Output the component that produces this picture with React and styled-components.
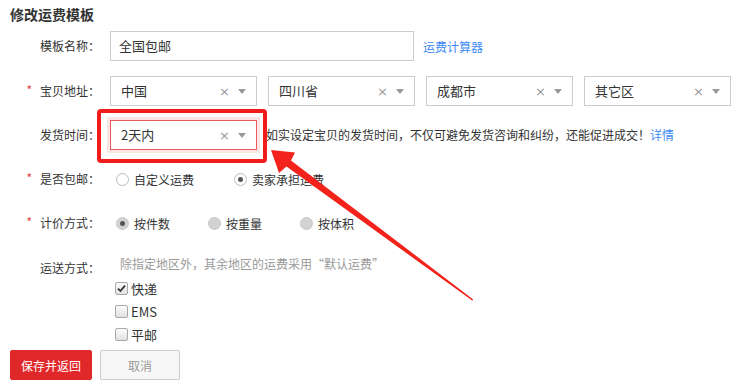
import React from "react";
import styled, { createGlobalStyle } from "styled-components";

const GlobalStyle = createGlobalStyle`
  body {
    margin: 0;
    font-family: "Noto Sans CJK SC", "Liberation Sans", sans-serif;
    font-size: 12px;
    color: #333;
    background: #fff;
  }
`;

const Page = styled.div`
  position: relative;
  width: 740px;
  height: 389px;
  overflow: hidden;
  padding: 4px 0 0 10px;
  box-sizing: border-box;
`;

const Title = styled.h2`
  margin: 0 0 7px;
  font-size: 14px;
  font-weight: bold;
  line-height: 20px;
  color: #333;
`;

const Row = styled.div`
  display: flex;
  align-items: ${(p) => (p.$top ? "flex-start" : "center")};
  height: ${(p) => (p.$auto ? "auto" : "30px")};
  margin-bottom: ${(p) => p.$mb ?? 14}px;
`;

const Label = styled.div`
  width: 90px;
  flex-shrink: 0;
  text-align: right;
  line-height: 20px;
  padding-top: ${(p) => p.$pt || 0}px;
  color: #333;
`;

const Star = styled.span`
  color: #e4393c;
  margin-right: 8px;
  position: relative;
  top: -1px;
`;

const Field = styled.div`
  margin-left: 10px;
  display: flex;
  align-items: center;
`;

const Input = styled.div`
  width: 304px;
  height: 30px;
  box-sizing: border-box;
  border: 1px solid #ccc;
  padding-left: 8px;
  font-size: 13px;
  line-height: 28px;
  color: #333;
`;

const Link = styled.a`
  color: #3d8af5;
  text-decoration: none;
  margin-left: ${(p) => p.$ml || 0}px;
  cursor: pointer;
`;

const Selects = styled.div`
  display: flex;
  gap: 11px;
`;

const SelectBox = styled.div`
  width: 147px;
  height: 30px;
  box-sizing: border-box;
  border: 1px solid ${(p) => (p.$focus ? "#ea5a5a" : "#ccc")};
  box-shadow: ${(p) => (p.$focus ? "0 0 0 3px #fbe6e6" : "none")};
  display: flex;
  align-items: center;
  padding: 0 10px 0 10px;
  font-size: 13px;
  color: #333;
`;

const SelectValue = styled.span`
  flex: 1;
  line-height: 28px;
`;

const Clear = styled.span`
  color: #999;
  font-size: 13px;
  font-family: "DejaVu Sans", sans-serif;
  margin-right: 8px;
  line-height: 1;
`;

const Caret = styled.span`
  width: 0;
  height: 0;
  border-left: 4.5px solid transparent;
  border-right: 4.5px solid transparent;
  border-top: 5px solid #999;
`;

const Help = styled.span`
  margin-left: 9px;
  line-height: 20px;
  color: #333;
`;

const RadioGroup = styled.div`
  display: flex;
  align-items: center;
  margin-left: 16px;
`;

const RadioItem = styled.label`
  display: flex;
  align-items: center;
  margin-right: ${(p) => p.$mr}px;
  font-size: 12px;
  color: #333;
`;

const RadioDot = styled.span`
  width: 13px;
  height: 13px;
  box-sizing: border-box;
  border-radius: 50%;
  border: 1px solid ${(p) => (p.$disabled ? "#c8c8c8" : "#bbb")};
  background: ${(p) => (p.$disabled ? "#d2d2d2" : "#fff")};
  margin-right: 5px;
  display: flex;
  align-items: center;
  justify-content: center;
  &::after {
    content: "";
    display: ${(p) => (p.$checked ? "block" : "none")};
    width: 5px;
    height: 5px;
    border-radius: 50%;
    background: #555;
  }
`;

const ShipBlock = styled.div`
  margin-left: 15px;
  display: flex;
  flex-direction: column;
`;

const Note = styled.div`
  color: #999;
  line-height: 20px;
  margin-left: 5px;
  margin-bottom: 3px;
`;

const CheckItem = styled.label`
  display: flex;
  align-items: center;
  height: 23px;
  font-size: 13px;
  color: #333;
`;

const CheckBox = styled.span`
  width: 13px;
  height: 13px;
  box-sizing: border-box;
  border: 1px solid #a8a8a8;
  border-radius: 2px;
  background: linear-gradient(#fbfbfb, #e2e2e2);
  margin-right: 3px;
  display: flex;
  align-items: center;
  justify-content: center;
`;

const Buttons = styled.div`
  display: flex;
  gap: 8px;
  margin-top: 4px;
`;

const Button = styled.button`
  height: 30px;
  width: ${(p) => p.$w}px;
  box-sizing: border-box;
  font-family: inherit;
  font-size: 12px;
  border-radius: 2px;
  border: 1px solid ${(p) => (p.$primary ? "#e0282b" : "#ccc")};
  background: ${(p) => (p.$primary ? "#e0282b" : "#f7f7f7")};
  color: ${(p) => (p.$primary ? "#fff" : "#999")};
  padding: 0;
  cursor: pointer;
`;

const Highlight = styled.div`
  position: absolute;
  left: 97px;
  top: 109px;
  width: 170px;
  height: 54px;
  box-sizing: border-box;
  border: 4px solid #f21c1c;
  border-radius: 4px;
  pointer-events: none;
`;

const ArrowLayer = styled.svg`
  position: absolute;
  left: 0;
  top: 0;
  pointer-events: none;
`;

const Select = ({ value, focus }) => (
  <SelectBox $focus={focus}>
    <SelectValue>{value}</SelectValue>
    <Clear>×</Clear>
    <Caret />
  </SelectBox>
);

const Radio = ({ text, checked, disabled, mr }) => (
  <RadioItem $mr={mr}>
    <RadioDot $checked={checked} $disabled={disabled} />
    {text}
  </RadioItem>
);

const Check = ({ text, checked }) => (
  <CheckItem>
    <CheckBox>
      {checked && (
        <svg width="9" height="9" viewBox="0 0 9 9">
          <path d="M1 4.6 L3.4 7 L8 1.6" fill="none" stroke="#333" strokeWidth="1.8" />
        </svg>
      )}
    </CheckBox>
    {text}
  </CheckItem>
);

export default function App() {
  return (
    <>
      <GlobalStyle />
      <Page>
        <Title>修改运费模板</Title>

        <Row $mb={15}>
          <Label>模板名称：</Label>
          <Field>
            <Input>全国包邮</Input>
            <Link $ml={9}>运费计算器</Link>
          </Field>
        </Row>

        <Row>
          <Label>
            <Star>*</Star>宝贝地址：
          </Label>
          <Field>
            <Selects>
              <Select value="中国" />
              <Select value="四川省" />
              <Select value="成都市" />
              <Select value="其它区" />
            </Selects>
          </Field>
        </Row>

        <Row>
          <Label>发货时间：</Label>
          <Field>
            <Select value="2天内" focus />
            <Help>
              如实设定宝贝的发货时间，不仅可避免发货咨询和纠纷，还能促进成交！
              <Link>详情</Link>
            </Help>
          </Field>
        </Row>

        <Row>
          <Label>
            <Star>*</Star>是否包邮：
          </Label>
          <RadioGroup>
            <Radio text="自定义运费" mr={40} />
            <Radio text="卖家承担运费" checked mr={0} />
          </RadioGroup>
        </Row>

        <Row $mb={16}>
          <Label>
            <Star>*</Star>计价方式：
          </Label>
          <RadioGroup>
            <Radio text="按件数" checked disabled mr={38} />
            <Radio text="按重量" disabled mr={38} />
            <Radio text="按体积" disabled mr={0} />
          </RadioGroup>
        </Row>

        <Row $top $auto $mb={0}>
          <Label $pt={4}>运送方式：</Label>
          <ShipBlock>
            <Note>除指定地区外，其余地区的运费采用“默认运费”</Note>
            <Check text="快递" checked />
            <Check text="EMS" />
            <Check text="平邮" />
          </ShipBlock>
        </Row>

        <Buttons>
          <Button $primary $w={82}>保存并返回</Button>
          <Button $w={80}>取消</Button>
        </Buttons>

        <Highlight />
        <ArrowLayer width="740" height="389" viewBox="0 0 740 389">
          <polygon
            points="271,150 295,152.5 291,160.5 473.2,299.4 472.2,300.6 286.5,166.5 279,173"
            fill="#f3231b"
          />
        </ArrowLayer>
      </Page>
    </>
  );
}
